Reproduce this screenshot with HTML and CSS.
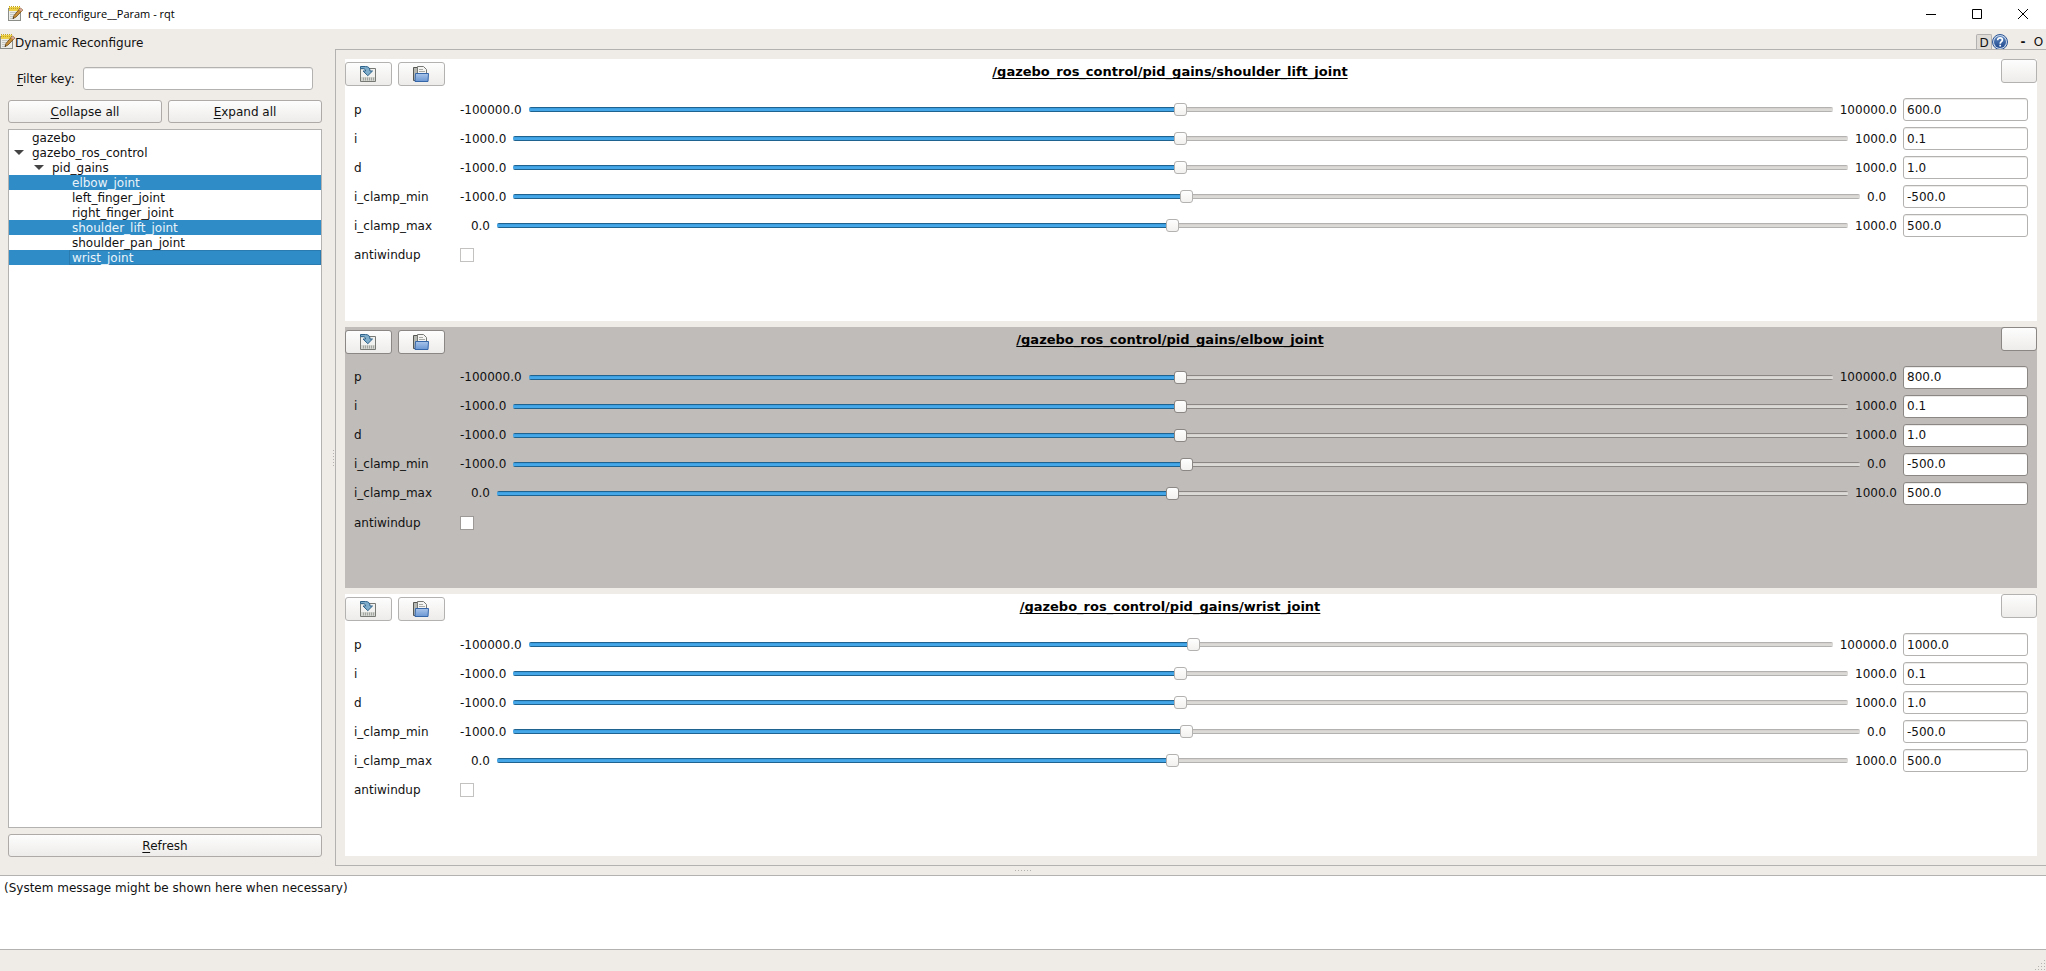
FILE: index.html
```html
<!DOCTYPE html>
<html lang="en">
<head>
<meta charset="utf-8">
<title>rqt_reconfigure__Param - rqt</title>
<link rel="stylesheet" href="styles.css">
</head>
<body>
<svg class="defs" aria-hidden="true">
  <defs>
    <linearGradient id="blue" x1="0" y1="0" x2="0" y2="1"><stop offset="0" stop-color="#a9c5ea"/><stop offset="1" stop-color="#6a97d3"/></linearGradient>
    <linearGradient id="help" x1="0" y1="0" x2="0" y2="1"><stop offset="0" stop-color="#5c84bd"/><stop offset="1" stop-color="#1f4a8f"/></linearGradient>
    <symbol id="note" viewBox="0 0 16 16">
      <rect x=".5" y="2.5" width="12" height="12" fill="#ecece9" stroke="#8b8d88"/>
      <path d="M2 6.500h8M2 8.500h6M2 10.500h4M2 12.500h4" stroke="#c4c6c1"/>
      <path d="M1 1h11v4H1z" fill="#ecd04a"/>
      <path d="M1.500 0v4M3.500 0v4M5.500 0v4M7.500 0v4M9.500 0v4M11.500 0v4" stroke="#c4a41a" stroke-dasharray="1 1"/>
      <path d="M12.300 2l2.500 2L8 11l-3 1.600L6 9.500z" fill="#c98f3a" stroke="#6b4710" stroke-width=".8"/>
      <path d="M12.300 2l2.500 2-1.400 1.500-2.400-2z" fill="#d9a9a0"/>
      <path d="M4.800 12.800l1.300-.7-.8-.9z" fill="#222"/>
    </symbol>
    <symbol id="save" viewBox="0 0 16 16">
      <path d="M.500 2.500h15v13H.500z" fill="#f1f1ef" stroke="#777975"/>
      <path d="M1 11h14v4H1z" fill="#d5d7d2"/>
      <path d="M3.500 11.500v3M5.500 11.500v3M7.500 11.500v3M9.500 11.500v3M11.500 11.500v3M13.500 11.500v3" stroke="#a2a49f"/>
      <path d="M.500.500h5c3 0 4.500 1.500 4.500 4.500h2.500L7.800 9.700 3 5h2.500c0-1.500-.8-2.300-2.200-2.300H.500z" fill="#7eaccb" stroke="#2e6289" stroke-linejoin="round"/>
    </symbol>
    <symbol id="open" viewBox="0 0 16 16">
      <path d="M.500 14.500v-13h4v13z" fill="#b5b7b3" stroke="#555753"/>
      <path d="M4.500 11V.500h6l3 3V11z" fill="#f4f4f2" stroke="#777975"/>
      <path d="M6 3.500h4M6 5.500h6" stroke="#a8aaa6"/>
      <path d="M2.500 7.500h13l-.5 8H2z" fill="url(#blue)" stroke="#3566a8" stroke-linejoin="round"/>
    </symbol>
  </defs>
</svg>

<header class="titlebar">
  <svg class="icon"><use href="#note"/></svg>
  <h1 class="window-title">rqt_reconfigure__Param - rqt</h1>
  <div class="window-controls">
    <button class="win-btn" aria-label="Minimize"><svg viewBox="0 0 12 12"><path d="M1 6.500h10"/></svg></button>
    <button class="win-btn" aria-label="Maximize"><svg viewBox="0 0 12 12"><path d="M1.500 1.500h9v9h-9z"/></svg></button>
    <button class="win-btn" aria-label="Close"><svg viewBox="0 0 12 12"><path d="M1 1l10 10M11 1L1 11"/></svg></button>
  </div>
</header>

<div class="dockbar">
  <svg class="icon"><use href="#note"/></svg>
  <h2 class="dock-title">Dynamic Reconfigure</h2>
  <button class="dock-btn dock-d">D</button>
  <button class="dock-btn" aria-label="Help"><svg class="icon" viewBox="0 0 16 16"><circle cx="8" cy="8" r="7.500" fill="#c9d7ea" stroke="#2c5596"/><circle cx="8" cy="8" r="6" fill="url(#help)"/><path d="M5.700 6.300C5.700 4.500 6.800 3.800 8.100 3.800s2.300.8 2.300 2.100C10.400 7.600 8.200 7.700 8.200 9.700M8.200 10.800v1.700" fill="none" stroke="#fff" stroke-width="1.700"/></svg></button>
  <button class="dock-btn dock-min">-</button>
  <button class="dock-btn dock-undock">O</button>
</div>

<main class="workspace">
  <aside class="sidebar">
    <div class="filter">
      <label for="filter"><u>F</u>ilter key:</label>
      <input id="filter" class="edit" type="text">
    </div>
    <div class="pair">
      <button class="push"><u>C</u>ollapse all</button>
      <button class="push"><u>E</u>xpand all</button>
    </div>
    <ul class="tree">
      <li class="item">gazebo</li>
      <li class="item branch">gazebo_ros_control</li>
      <li class="item branch level-1">pid_gains</li>
      <li class="item level-2 selected">elbow_joint</li>
      <li class="item level-2">left_finger_joint</li>
      <li class="item level-2">right_finger_joint</li>
      <li class="item level-2 selected">shoulder_lift_joint</li>
      <li class="item level-2">shoulder_pan_joint</li>
      <li class="item level-2 selected current"><span>wrist_joint</span></li>
    </ul>
    <button class="push"><u>R</u>efresh</button>
  </aside>
  <div class="splitter"><i class="grip"></i></div>
  <div class="groups" id="groups"></div>
</main>

<div class="hsplitter"><i class="grip"></i></div>
<section class="messages">(System message might be shown here when necessary)</section>
<footer class="statusbar"><svg class="sizegrip" viewBox="0 0 11 11"><path d="M9 0h1v1H9zM6 3h1v1H6zM9 3h1v1H9zM3 6h1v1H3zM6 6h1v1H6zM9 6h1v1H9zM0 9h1v1H0zM3 9h1v1H3zM6 9h1v1H6zM9 9h1v1H9z"/></svg></footer>
<script src="app.js"></script>
</body>
</html>
```
FILE: styles.css
```css
* { box-sizing: border-box; }

:root {
  --bg: #efebe7;
  --line: #b4b2b0;
  --groove: #b4b2b0;
}

body {
  margin: 0;
  height: 100vh;
  display: flex;
  flex-direction: column;
  overflow: hidden;
  background: var(--bg);
  color: #111;
  font: 12px/15px "DejaVu Sans", sans-serif;
}

button, input { font: inherit; color: inherit; }
button { padding: 0; }
h1, h2, h3 { margin: 0; font: inherit; }
u { text-underline-offset: 2px; }

.defs { position: absolute; width: 0; height: 0; }
.icon { display: block; width: 16px; height: 16px; flex: none; }

.titlebar {
  display: flex;
  align-items: center;
  flex: none;
  height: 29px;
  padding: 0 0 2px 8px;
  gap: 4px;
  background: #fff;
}
.window-title { font: 11px/16px "Open Sans", sans-serif; color: #000; }
.window-controls { display: flex; margin-left: auto; }
.win-btn {
  display: grid;
  place-items: center;
  width: 46px;
  height: 26px;
  border: 0;
  background: none;
}
.win-btn svg { width: 12px; height: 12px; fill: none; stroke: #000; }

.dockbar {
  display: flex;
  align-items: center;
  flex: none;
  height: 20px;
  padding-top: 6px;
}
.dock-title { margin: 2px auto 0 -1px; }
.dock-btn { width: 16px; height: 16px; border: 0; background: none; line-height: 16px; }
.dock-d { border: 1px solid var(--line); border-bottom: 0; border-radius: 2px 2px 0 0; background: #dfdcd8; }
.dock-min { margin-left: 7px; font-weight: bold; }
.dock-undock { width: 15px; }

.workspace { display: flex; flex: 1; min-height: 0; }

.sidebar {
  display: flex;
  flex-direction: column;
  gap: 6px;
  width: 322px;
  padding: 18px 0 9px 8px;
}
.filter {
  display: flex;
  align-items: center;
  gap: 8px;
  padding: 0 9px;
  margin-bottom: 4px;
}
.filter label { padding-top: 1px; }
.edit {
  height: 23px;
  min-width: 0;
  padding: 0 3px;
  border: 1px solid var(--line);
  border-radius: 3px;
  background: #fff;
  box-shadow: inset 0 1px #ecebea;
  outline: 0;
}
.filter .edit { flex: 1; }
.pair { display: grid; grid-template-columns: 1fr 1fr; gap: 6px; }
.push {
  height: 23px;
  padding-top: 1px;
  border: 1px solid #aeaaa7;
  border-radius: 3px;
  background: linear-gradient(#fdfdfd, #eeecea);
}
.tree {
  flex: 1;
  margin: 0;
  padding: 0;
  border: 1px solid var(--line);
  background: #fff;
  list-style: none;
}
.item { position: relative; height: 15px; padding-left: 23px; line-height: 17px; }
.level-1 { padding-left: 43px; }
.level-2 { padding-left: 63px; }
.selected { background: #308cc6; color: #e9f3fa; }
.current { padding-left: 60px; }
.current span { display: block; height: 15px; padding-left: 2px; border: 1px solid #2a7cb0; line-height: 15px; }
.branch::before {
  content: "";
  position: absolute;
  top: 5px;
  left: 5px;
  border: solid transparent;
  border-width: 5px 5px 0;
  border-top-color: #444;
}
.level-1::before { left: 25px; }

.splitter { display: grid; place-items: center end; width: 13px; padding-right: 1px; }
.splitter .grip { width: 1px; height: 16px; background: repeating-linear-gradient(var(--line) 0 1px, transparent 1px 3px); }

.groups {
  display: grid;
  grid-auto-rows: 1fr;
  gap: 6px;
  flex: 1;
  padding: 9px;
  border: 1px solid var(--line);
  border-right: 0;
}
.group { background: #fff; --edge: #b4b2b0; }
.group:nth-child(even) { background: #c0bcb9; --edge: #8b8784; --groove: #8b8784; }
.group-head { display: grid; grid-template-columns: 100px 1fr 42px; align-items: start; }
.tools { display: flex; gap: 6px; padding-top: 3px; grid-area: 1 / 1; }
.tool {
  display: grid;
  place-items: center;
  width: 47px;
  height: 24px;
  padding-right: 1px;
  border: 1px solid var(--edge);
  border-radius: 3px;
  background: linear-gradient(#fdfdfd, #eeecea);
}
.close { width: 36px; justify-self: end; }
.group-title {
  grid-area: 1 / 1 / 2 / 3;
  justify-self: center;
  padding-top: 5px;
  color: #000;
  font-weight: bold;
  font-size: 13px;
  text-decoration: underline;
  text-decoration-skip-ink: none;
  text-underline-offset: 2px;
}
.params { display: grid; gap: 6px; padding: 12px 9px 0; }
.param { display: flex; align-items: center; gap: 6px; height: 23px; }
.param.flag { height: 24px; }
.name, .min, .max { padding-top: 1px; }
.name { width: 100px; }
.min, .max { min-width: 30px; }
.min { text-align: right; }
.param .edit { width: 125px; border-color: var(--edge); }

.slider {
  flex: 1;
  min-width: 0;
  height: 13px;
  margin: 0 1px;
  appearance: none;
  background: none;
}
.slider::-webkit-slider-runnable-track {
  height: 5px;
  border-radius: 2px;
  background:
    linear-gradient(#1f6391 0 1px, #3d9fe0 1px 2px, #45a7e8 2px 4px, #1f6391 4px) 0 0 / var(--fill) 100% no-repeat,
    linear-gradient(var(--groove) 0 1px, #d5d2cf 1px 2px, #dcdad7 2px 4px, var(--groove) 4px);
}
.slider::-webkit-slider-thumb {
  appearance: none;
  width: 13px;
  height: 13px;
  margin-top: -4px;
  border: 1px solid var(--edge);
  border-radius: 3px;
  background: linear-gradient(#fefefe, #f3f1ef);
}
.check {
  appearance: none;
  width: 14px;
  height: 14px;
  margin: 0;
  border: 1px solid #c4c2c0;
  background: #fff;
}
.group:nth-child(even) .check { border-color: #9c9996; }

.hsplitter { display: grid; place-items: center; flex: none; height: 9px; }
.hsplitter .grip { width: 16px; height: 1px; background: repeating-linear-gradient(90deg, var(--line) 0 1px, transparent 1px 3px); }
.messages {
  flex: none;
  height: 75px;
  padding: 5px 4px;
  border: solid var(--line);
  border-width: 1px 0;
  background: #fff;
}
.statusbar { display: flex; flex: none; height: 21px; align-items: end; justify-content: end; }
.sizegrip { width: 11px; height: 11px; fill: var(--line); }
```
FILE: app.js
```js
const groups = [
  { joint: "shoulder_lift_joint", p: "600.0", pos: 50 },
  { joint: "elbow_joint", p: "800.0", pos: 50 },
  { joint: "wrist_joint", p: "1000.0", pos: 51 },
];

function slider(joint, name, min, max, value, pos) {
  const id = joint + "-" + name;
  return `<div class="param">
    <label class="name" for="${id}">${name}</label>
    <span class="min">${min}</span>
    <input class="slider" type="range" min="0" max="100" value="${pos}" style="--fill:${pos}%" aria-label="${name} slider">
    <span class="max">${max}</span>
    <input class="edit" id="${id}" type="text" value="${value}">
  </div>`;
}

document.getElementById("groups").innerHTML = groups.map(g => `
  <section class="group">
    <div class="group-head">
      <h3 class="group-title">/gazebo_ros_control/pid_gains/${g.joint}</h3>
      <div class="tools">
        <button class="tool" aria-label="Save"><svg class="icon"><use href="#save"/></svg></button>
        <button class="tool" aria-label="Load"><svg class="icon"><use href="#open"/></svg></button>
      </div>
      <button class="tool close" aria-label="Close group"></button>
    </div>
    <div class="params">
      ${slider(g.joint, "p", "-100000.0", "100000.0", g.p, g.pos)}
      ${slider(g.joint, "i", "-1000.0", "1000.0", "0.1", 50)}
      ${slider(g.joint, "d", "-1000.0", "1000.0", "1.0", 50)}
      ${slider(g.joint, "i_clamp_min", "-1000.0", "0.0", "-500.0", 50)}
      ${slider(g.joint, "i_clamp_max", "0.0", "1000.0", "500.0", 50)}
      <div class="param flag">
        <label class="name" for="${g.joint}-aw">antiwindup</label>
        <input class="check" id="${g.joint}-aw" type="checkbox">
      </div>
    </div>
  </section>`).join("");
```
